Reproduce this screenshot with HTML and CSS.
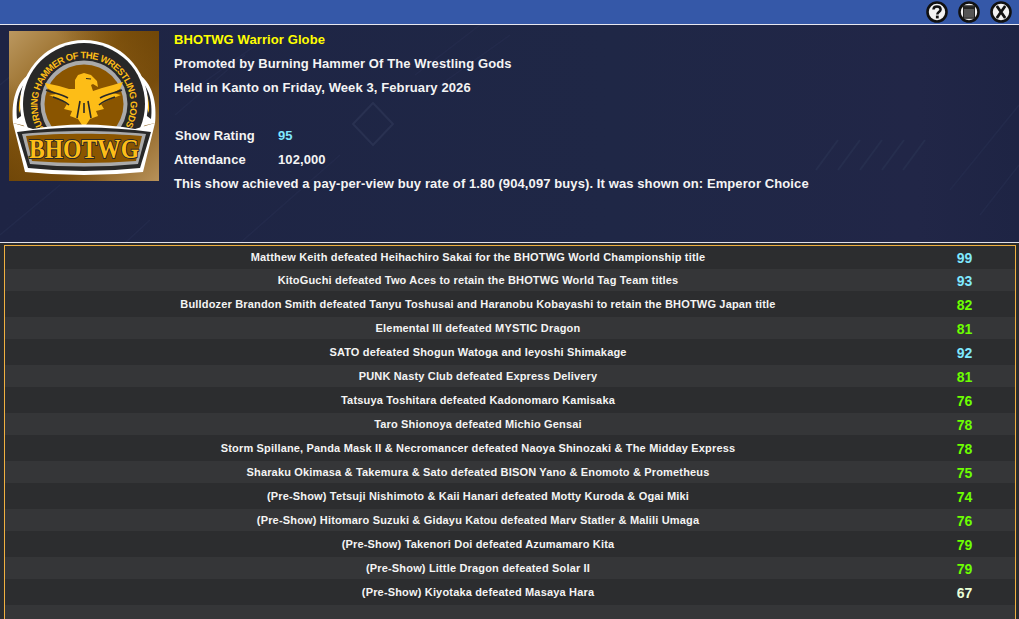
FILE: index.html
```html
<!DOCTYPE html>
<html lang="en">
<head>
<meta charset="utf-8">
<title>BHOTWG Warrior Globe</title>
<link rel="stylesheet" href="styles.css">
</head>
<body>
<div class="page">
  <div class="topbar">
    <svg class="ico" viewBox="0 0 22 22"><circle cx="11" cy="11" r="9.5" fill="#f2f2f2" stroke="#111" stroke-width="2.6"/><path d="M7.5 8.6C7.5 6.6 9 5.5 11 5.5s3.6 1.1 3.6 3c0 2.6-3.3 2.6-3.3 5" fill="none" stroke="#111" stroke-width="2.5"/><rect x="9.9" y="14.6" width="2.8" height="2.8" fill="#111"/></svg>
    <svg class="ico" viewBox="0 0 22 22"><circle cx="11" cy="11" r="9.5" fill="#f2f2f2" stroke="#111" stroke-width="2.6"/><rect x="5.500" y="4.800" width="11" height="12.400" fill="#555" stroke="#222"/><rect x="6" y="5.300" width="10" height="2.700" fill="#222"/></svg>
    <svg class="ico" viewBox="0 0 22 22"><circle cx="11" cy="11" r="9.5" fill="#f2f2f2" stroke="#111" stroke-width="2.6"/><path d="M6.800 5 15.200 17M15.200 5 6.800 17" stroke="#111" stroke-width="2.800" fill="none"/></svg>
  </div>
  <header class="head">
    <svg class="deco" viewBox="0 0 1019 218" preserveAspectRatio="none">
      <path d="M373 78 393 99 373 120 353 99Z" fill="none" stroke="#293151" stroke-width="2"/>
      <path d="M816 145 838 115M838 145 860 115M860 145 882 115M882 145 904 115M903 145 925 115" stroke="#262e4e" stroke-width="2" fill="none"/>
      <path d="M175 90 245 30M200 60 270 10M415 50 480 0M440 60 510 10M0 60 60 10M0 210 60 160M125 218 150 195M240 218 340 130M950 165 1019 80M980 190 1019 140" stroke="#232a4b" stroke-width="1.500" fill="none"/>
    </svg>
    <svg class="logo" viewBox="0 0 150 150">
      <defs>
        <linearGradient id="bgl" x1="0" y1="0" x2="1" y2="1"><stop offset="0" stop-color="#bb9860"/><stop offset=".4" stop-color="#8a5b12"/><stop offset=".65" stop-color="#7f5210"/><stop offset="1" stop-color="#b8925a"/></linearGradient>
        <linearGradient id="bgd" x1="1" y1="0" x2="0" y2="1"><stop offset="0" stop-color="#6e4507" stop-opacity=".9"/><stop offset=".35" stop-color="#6e4507" stop-opacity="0"/><stop offset=".65" stop-color="#6e4507" stop-opacity="0"/><stop offset="1" stop-color="#6e4507" stop-opacity=".9"/></linearGradient>
        <path id="arc" d="M36.600 100A46.500 46.500 0 1 1 113.400 100"/>
      </defs>
      <rect width="150" height="150" fill="url(#bgl)"/>
      <rect width="150" height="150" fill="url(#bgd)"/>
      <path d="M4 92 13 79 30 98Z" fill="#fff"/>
      <path d="M146 92 137 79 120 98Z" fill="#fff"/>
      <path d="M24 41C6 50 2 72 4 92L30 92V48Z" fill="#fff"/>
      <path d="M126 41C144 50 148 72 146 92L120 92V48Z" fill="#fff"/>
      <path d="M26 44C10 52 6 70 8 88L30 72Z" fill="#282828"/>
      <path d="M124 44C140 52 144 70 142 88L120 72Z" fill="#282828"/>
      <path d="M24 46C13 54 9 68 10 82L14 72 15 80 20 66 23 72 25 56Z" fill="#fdbd17"/>
      <path d="M126 46C137 54 141 68 140 82L136 72 135 80 130 66 127 72 125 56Z" fill="#fdbd17"/>
      <circle cx="75" cy="73" r="64" fill="#fff"/>
      <circle cx="75" cy="73" r="61" fill="#282828"/>
      <circle cx="75" cy="73" r="43.500" fill="#aaa"/>
      <circle cx="75" cy="73" r="39.500" fill="#8a5500"/>
      <text class="arc-text"><textPath href="#arc" textLength="196" lengthAdjust="spacing">BURNING HAMMER OF THE WRESTLING GODS</textPath></text>
      <path d="M75 97 69 88 61 85 63 80 55 78 58 73 50 68 40 64 48 63 38 57 36 52 50 55 60 58 66 58 66 49 69 44 75 42 82 44 88 50 89 56 84 53 82 54 84 60 93 57 104 54 114 51 111 58 104 62 112 64 102 68 92 73 95 78 87 80 89 85 81 88Z" fill="#fdbd17"/>
      <path d="M37 59C44 62 52 63 59 67M44 66C50 68 56 70 60 74M71 70 68 87M79 70 82 87M75 72V82M113 59C106 62 98 63 91 67M106 66C100 68 94 70 90 74" stroke="#282828" stroke-width="1.600" fill="none"/>
      <path d="M77 47.500 82 48" stroke="#282828" stroke-width="1.200"/>
      <path d="M4 92 24 98C56 92 94 92 126 98L146 92 134 141Q75 147 16 141Z" fill="#fff"/>
      <path d="M8 101C50 95 100 95 142 101L131 137Q75 143 19 137Z" fill="#282828"/>
      <path d="M13 103C50 99 100 99 137 103L129 133Q75 138 21 133Z" fill="#aaa"/>
      <path d="M17 105C50 102 100 102 133 105L127 130Q75 134 23 130Z" fill="#8a5500"/>
      <text x="20" y="127" class="brand" textLength="110" lengthAdjust="spacingAndGlyphs">BHOTWG</text>
    </svg>
    <div class="info">
      <div class="line title">BHOTWG Warrior Globe</div>
      <div class="line">Promoted by Burning Hammer Of The Wrestling Gods</div>
      <div class="line">Held in Kanto on Friday, Week 3, February 2026</div>
      <div class="line"></div>
      <div class="line stat"><span class="label shifted">Show Rating</span><span class="cyan">95</span></div>
      <div class="line stat"><span class="label">Attendance</span><span>102,000</span></div>
      <div class="line">This show achieved a pay-per-view buy rate of 1.80 (904,097 buys). It was shown on: Emperor Choice</div>
    </div>
  </header>
  <main class="panel">
    <div class="list">
      <div class="row"><span class="match">Matthew Keith defeated Heihachiro Sakai for the BHOTWG World Championship title</span><span class="score cyan">99</span></div>
      <div class="row"><span class="match">KitoGuchi defeated Two Aces to retain the BHOTWG World Tag Team titles</span><span class="score cyan">93</span></div>
      <div class="row"><span class="match">Bulldozer Brandon Smith defeated Tanyu Toshusai and Haranobu Kobayashi to retain the BHOTWG Japan title</span><span class="score green">82</span></div>
      <div class="row"><span class="match">Elemental III defeated MYSTIC Dragon</span><span class="score green">81</span></div>
      <div class="row"><span class="match">SATO defeated Shogun Watoga and Ieyoshi Shimakage</span><span class="score cyan">92</span></div>
      <div class="row"><span class="match">PUNK Nasty Club defeated Express Delivery</span><span class="score green">81</span></div>
      <div class="row"><span class="match">Tatsuya Toshitara defeated Kadonomaro Kamisaka</span><span class="score green">76</span></div>
      <div class="row"><span class="match">Taro Shionoya defeated Michio Gensai</span><span class="score green">78</span></div>
      <div class="row"><span class="match">Storm Spillane, Panda Mask II &amp; Necromancer defeated Naoya Shinozaki &amp; The Midday Express</span><span class="score green">78</span></div>
      <div class="row"><span class="match">Sharaku Okimasa &amp; Takemura &amp; Sato defeated BISON Yano &amp; Enomoto &amp; Prometheus</span><span class="score green">75</span></div>
      <div class="row"><span class="match">(Pre-Show) Tetsuji Nishimoto &amp; Kaii Hanari defeated Motty Kuroda &amp; Ogai Miki</span><span class="score green">74</span></div>
      <div class="row"><span class="match">(Pre-Show) Hitomaro Suzuki &amp; Gidayu Katou defeated Marv Statler &amp; Malili Umaga</span><span class="score green">76</span></div>
      <div class="row"><span class="match">(Pre-Show) Takenori Doi defeated Azumamaro Kita</span><span class="score green">79</span></div>
      <div class="row"><span class="match">(Pre-Show) Little Dragon defeated Solar II</span><span class="score green">79</span></div>
      <div class="row"><span class="match">(Pre-Show) Kiyotaka defeated Masaya Hara</span><span class="score pale">67</span></div>
      <div class="row"></div>
    </div>
  </main>
</div>
</body>
</html>
```
FILE: styles.css
```css
html, body { margin: 0; padding: 0; height: 100%; overflow: hidden; }
body { font-family: "Liberation Sans", Arial, sans-serif; font-weight: 700; color: #f4f4f4; background: #2b2c2e; }
.page { width: 1019px; height: 619px; display: flex; flex-direction: column; overflow: hidden; }
.topbar { background: #3558a8; border-bottom: 1px solid #e8e8f0; display: flex; justify-content: flex-end; align-items: flex-start; gap: 10px; padding: 1px 7px 0 0; box-sizing: border-box; flex: none; height: 25px; }
.ico { width: 22px; height: 22px; display: block; }
.head { position: relative; height: 218px; flex: none; box-sizing: border-box; border-bottom: 1px solid #e0e0e8; background: linear-gradient(90deg, #1e2444 0%, #1f2746 60%, #212647 90%, #1e2444 100%); display: flex; align-items: flex-start; gap: 15px; padding: 3px 0 0 9px; overflow: hidden; }
.deco { position: absolute; left: 0; top: 0; width: 1019px; height: 218px; }
.logo { width: 150px; height: 150px; flex: none; position: relative; margin-top: 3px; }
.arc-text { font: 700 9.5px "Liberation Sans", sans-serif; fill: #fdbd17; }
.brand { font: 700 28px "Liberation Serif", serif; fill: #fdbd17; stroke: #282828; stroke-width: 2px; paint-order: stroke; }
.info { position: relative; font-size: 13px; letter-spacing: .1px; }
.line { height: 24px; line-height: 24px; white-space: nowrap; }
.title { color: #ffff00; }
.stat { display: flex; }
.label { width: 104px; }
.shifted { padding-left: 1px; width: 103px; }
.cyan { color: #7fe8ff; }
.green { color: #6cff00; }
.pale { color: #eaffd8; }
.panel { flex: 1; min-height: 0; padding: 2px 3px 0 4px; background: #2b2c2e; }
.list { height: 100%; border: 1px solid #f0b040; border-bottom: 0; box-sizing: border-box; display: flex; flex-direction: column; }
.row { flex: none; height: 26px; display: flex; align-items: center; background: #2c2d2f; }
.row:nth-child(even) { height: 22px; background: #353638; }
.row:first-child { height: 23px; box-sizing: border-box; padding-bottom: 2px; }
.match { flex: 1; text-align: center; font-size: 11px; letter-spacing: .17px; }
.score { width: 64px; box-sizing: border-box; padding: 2px 37px 0 0; text-align: center; font-size: 14px; }
```
